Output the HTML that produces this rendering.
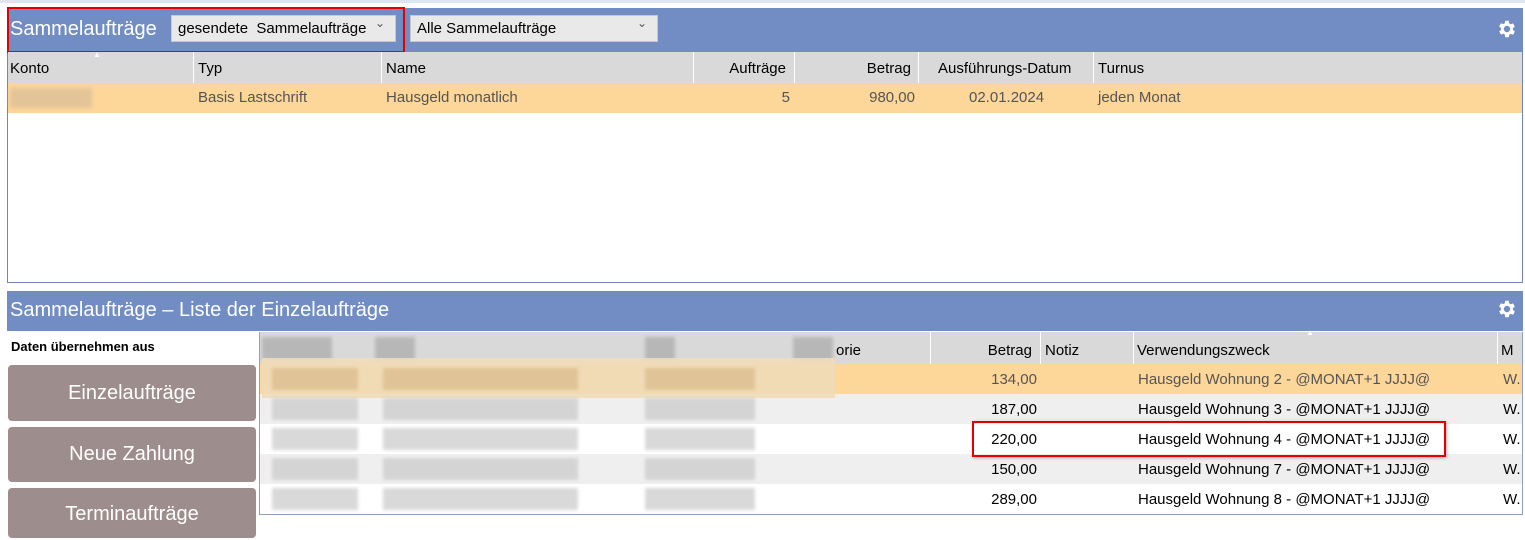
<!DOCTYPE html>
<html><head><meta charset="utf-8"><style>
*{box-sizing:border-box;margin:0;padding:0}
body{width:1525px;height:531px;background:#fff;font-family:"Liberation Sans",Arial,sans-serif;position:relative;overflow:hidden;font-size:15px;color:#222}
.a{position:absolute}
.blue{background:#718dc3}
.gray{background:#d9d9d9}
.t{position:absolute;white-space:nowrap}
.r{position:absolute;white-space:nowrap;text-align:right;width:200px}
.sel{position:absolute;background:#e9e9e9;border:1px solid #c8c8c8;font-size:15px;color:#000;padding:4px 6px}
.sel:after{content:"\2304";position:absolute;right:10px;top:0;font-size:12px;color:#555}
.btn{position:absolute;left:8px;width:248px;background:#9e8d8d;border-radius:4px;color:#fff;font-size:20px;text-align:center}
.blur{position:absolute;background:#c9c9c9;opacity:.7;filter:blur(1.5px)}
.div{position:absolute;width:1px;background:#fff}
</style></head><body>
<div class="a" style="left:0;top:0;width:1525px;height:3px;background:#dfe5ef"></div>
<div class="a" style="left:7px;top:8px;width:1516px;height:275px;border:1px solid #6f86b5;border-top:none"></div>
<div class="a blue" style="left:7px;top:8px;width:1516px;height:44px"></div>
<div class="t" style="left:10px;top:18px;font-size:20px;color:#fff">Sammelaufträge</div>
<div class="sel" style="left:171px;top:15px;width:225px;height:27px">gesendete&nbsp; Sammelaufträge</div>
<div class="sel" style="left:410px;top:15px;width:248px;height:27px">Alle Sammelaufträge</div>
<div class="a" style="left:7px;top:7px;width:398px;height:46px;border:2px solid #e30000"></div>
<svg class="a" style="left:1496px;top:18px" width="22" height="22" viewBox="0 0 24 24"><path fill="#fff" d="M19.4 13a7.5 7.5 0 0 0 0-2l2.1-1.6-2-3.5-2.5 1a7 7 0 0 0-1.7-1L15 3h-4l-.4 2.7a7 7 0 0 0-1.7 1l-2.5-1-2 3.5L6.6 11a7.5 7.5 0 0 0 0 2l-2.1 1.6 2 3.5 2.5-1a7 7 0 0 0 1.7 1L11 21h4l.4-2.7a7 7 0 0 0 1.7-1l2.5 1 2-3.5zM13 15.5a3.5 3.5 0 1 1 0-7 3.5 3.5 0 0 1 0 7z" transform="translate(-1 0)"/></svg>
<div class="a gray" style="left:8px;top:52px;width:1514px;height:31px"></div>
<div class="t" style="left:93px;top:50px;color:#fff;font-size:8px">▲</div>
<div class="div" style="left:193px;top:52px;height:31px"></div>
<div class="div" style="left:381px;top:52px;height:31px"></div>
<div class="div" style="left:693px;top:52px;height:31px"></div>
<div class="div" style="left:794px;top:52px;height:31px"></div>
<div class="div" style="left:918px;top:52px;height:31px"></div>
<div class="div" style="left:1093px;top:52px;height:31px"></div>
<div class="t" style="left:10px;top:60px;color:#000">Konto</div>
<div class="t" style="left:198px;top:60px;color:#000">Typ</div>
<div class="t" style="left:386px;top:60px;color:#000">Name</div>
<div class="r" style="left:586px;top:60px;color:#000">Aufträge</div>
<div class="r" style="left:711px;top:60px;color:#000">Betrag</div>
<div class="t" style="left:938px;top:60px;color:#000">Ausführungs-Datum</div>
<div class="t" style="left:1098px;top:60px;color:#000">Turnus</div>
<div class="a" style="left:8px;top:83px;width:1514px;height:30px;background:#fdd699"></div>
<div class="a" style="left:10px;top:88px;width:82px;height:20px;background:#e3c498;filter:blur(2px)"></div>
<div class="t" style="left:198px;top:89px;color:#555">Basis Lastschrift</div>
<div class="t" style="left:386px;top:89px;color:#555">Hausgeld monatlich</div>
<div class="r" style="left:590px;top:89px;color:#555">5</div>
<div class="r" style="left:715px;top:89px;color:#555">980,00</div>
<div class="t" style="left:969px;top:89px;color:#555">02.01.2024</div>
<div class="t" style="left:1098px;top:89px;color:#555">jeden Monat</div>
<div class="a blue" style="left:7px;top:291px;width:1516px;height:40px"></div>
<div class="t" style="left:10px;top:299px;font-size:20px;color:#fff">Sammelaufträge – Liste der Einzelaufträge</div>
<svg class="a" style="left:1496px;top:298px" width="22" height="22" viewBox="0 0 24 24"><path fill="#fff" d="M19.4 13a7.5 7.5 0 0 0 0-2l2.1-1.6-2-3.5-2.5 1a7 7 0 0 0-1.7-1L15 3h-4l-.4 2.7a7 7 0 0 0-1.7 1l-2.5-1-2 3.5L6.6 11a7.5 7.5 0 0 0 0 2l-2.1 1.6 2 3.5 2.5-1a7 7 0 0 0 1.7 1L11 21h4l.4-2.7a7 7 0 0 0 1.7-1l2.5 1 2-3.5zM13 15.5a3.5 3.5 0 1 1 0-7 3.5 3.5 0 0 1 0 7z" transform="translate(-1 0)"/></svg>
<div class="t" style="left:11px;top:339px;font-size:13px;font-weight:bold;color:#000">Daten übernehmen aus</div>
<div class="btn" style="top:365px;height:56px;line-height:56px">Einzelaufträge</div>
<div class="btn" style="top:427px;height:55px;line-height:55px">Neue Zahlung</div>
<div class="btn" style="top:488px;height:50px;line-height:52px">Terminaufträge</div>
<div class="a" style="left:259px;top:332px;width:1264px;height:183px;border:1px solid #8fa0c0;border-top:none"></div>
<div class="a gray" style="left:260px;top:332px;width:1262px;height:32px"></div>
<div class="div" style="left:930px;top:332px;height:32px"></div>
<div class="div" style="left:1040px;top:332px;height:32px"></div>
<div class="div" style="left:1133px;top:332px;height:32px"></div>
<div class="div" style="left:1497px;top:332px;height:32px"></div>
<div class="t" style="left:1306px;top:328px;color:#fff;font-size:8px">▲</div>
<div class="t" style="left:836px;top:342px;color:#000">orie</div>
<div class="r" style="left:832px;top:342px;color:#000">Betrag</div>
<div class="t" style="left:1045px;top:342px;color:#000">Notiz</div>
<div class="t" style="left:1137px;top:342px;color:#000">Verwendungszweck</div>
<div class="t" style="left:1501px;top:342px;color:#000">M</div>
<div class="a" style="left:260px;top:364px;width:1262px;height:30px;background:#fdd699"></div>
<div class="a" style="left:260px;top:394px;width:1262px;height:30px;background:#efefef"></div>
<div class="a" style="left:260px;top:454px;width:1262px;height:30px;background:#efefef"></div>
<div class="blur" style="left:262px;top:337px;width:70px;height:24px;background:#aaa"></div>
<div class="blur" style="left:375px;top:337px;width:40px;height:24px;background:#aaa"></div>
<div class="blur" style="left:645px;top:337px;width:30px;height:24px;background:#aaa"></div>
<div class="blur" style="left:793px;top:337px;width:40px;height:24px;background:#aaa"></div>
<div class="a" style="left:262px;top:358px;width:573px;height:40px;background:#f0dcb8;opacity:.9"></div>
<div class="blur" style="left:272px;top:368px;width:86px;height:22px;background:#d9b98a"></div>
<div class="blur" style="left:383px;top:368px;width:195px;height:22px;background:#d9b98a"></div>
<div class="blur" style="left:645px;top:368px;width:110px;height:22px;background:#d9b98a"></div>
<div class="blur" style="left:272px;top:398px;width:86px;height:22px"></div>
<div class="blur" style="left:383px;top:398px;width:195px;height:22px"></div>
<div class="blur" style="left:645px;top:398px;width:110px;height:22px"></div>
<div class="blur" style="left:272px;top:428px;width:86px;height:22px"></div>
<div class="blur" style="left:383px;top:428px;width:195px;height:22px"></div>
<div class="blur" style="left:645px;top:428px;width:110px;height:22px"></div>
<div class="blur" style="left:272px;top:458px;width:86px;height:22px"></div>
<div class="blur" style="left:383px;top:458px;width:195px;height:22px"></div>
<div class="blur" style="left:645px;top:458px;width:110px;height:22px"></div>
<div class="blur" style="left:272px;top:488px;width:86px;height:22px"></div>
<div class="blur" style="left:383px;top:488px;width:195px;height:22px"></div>
<div class="blur" style="left:645px;top:488px;width:110px;height:22px"></div>
<div class="r" style="left:837px;top:371px;color:#555">134,00</div>
<div class="t" style="left:1138px;top:371px;color:#555">Hausgeld Wohnung 2 - @MONAT+1 JJJJ@</div>
<div class="t" style="left:1503px;top:371px;color:#555">W.</div>
<div class="r" style="left:837px;top:401px;color:#000">187,00</div>
<div class="t" style="left:1138px;top:401px;color:#000">Hausgeld Wohnung 3 - @MONAT+1 JJJJ@</div>
<div class="t" style="left:1503px;top:401px;color:#000">W.</div>
<div class="r" style="left:837px;top:431px;color:#000">220,00</div>
<div class="t" style="left:1138px;top:431px;color:#000">Hausgeld Wohnung 4 - @MONAT+1 JJJJ@</div>
<div class="t" style="left:1503px;top:431px;color:#000">W.</div>
<div class="r" style="left:837px;top:461px;color:#000">150,00</div>
<div class="t" style="left:1138px;top:461px;color:#000">Hausgeld Wohnung 7 - @MONAT+1 JJJJ@</div>
<div class="t" style="left:1503px;top:461px;color:#000">W.</div>
<div class="r" style="left:837px;top:491px;color:#000">289,00</div>
<div class="t" style="left:1138px;top:491px;color:#000">Hausgeld Wohnung 8 - @MONAT+1 JJJJ@</div>
<div class="t" style="left:1503px;top:491px;color:#000">W.</div>
<div class="a" style="left:972px;top:421px;width:474px;height:36px;border:2px solid #e30000;box-shadow:1px 1px 3px rgba(0,0,0,.3)"></div>
</body></html>
